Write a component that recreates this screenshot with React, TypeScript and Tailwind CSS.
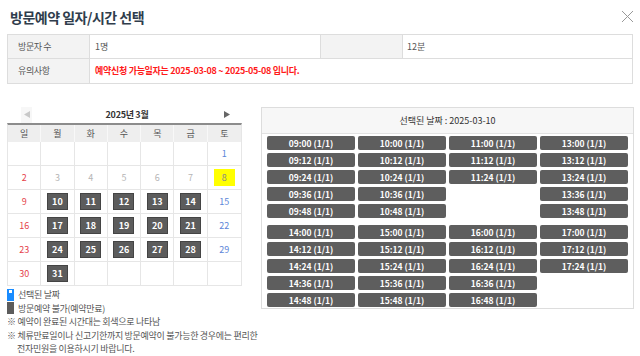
import React from "react";

const font = { fontFamily: '"Noto Sans CJK KR", "Noto Sans", sans-serif' };

type Cell = { d?: number; kind?: "sun" | "sat" | "past" | "off" | "today" | "empty" };

const weeks: Cell[][] = [
  [{}, {}, {}, {}, {}, {}, { d: 1, kind: "sat" }],
  [
    { d: 2, kind: "sun" },
    { d: 3, kind: "past" },
    { d: 4, kind: "past" },
    { d: 5, kind: "past" },
    { d: 6, kind: "past" },
    { d: 7, kind: "past" },
    { d: 8, kind: "today" },
  ],
  [
    { d: 9, kind: "sun" },
    { d: 10, kind: "off" },
    { d: 11, kind: "off" },
    { d: 12, kind: "off" },
    { d: 13, kind: "off" },
    { d: 14, kind: "off" },
    { d: 15, kind: "sat" },
  ],
  [
    { d: 16, kind: "sun" },
    { d: 17, kind: "off" },
    { d: 18, kind: "off" },
    { d: 19, kind: "off" },
    { d: 20, kind: "off" },
    { d: 21, kind: "off" },
    { d: 22, kind: "sat" },
  ],
  [
    { d: 23, kind: "sun" },
    { d: 24, kind: "off" },
    { d: 25, kind: "off" },
    { d: 26, kind: "off" },
    { d: 27, kind: "off" },
    { d: 28, kind: "off" },
    { d: 29, kind: "sat" },
  ],
  [{ d: 30, kind: "sun" }, { d: 31, kind: "off" }, {}, {}, {}, {}, {}],
];

const days = ["일", "월", "화", "수", "목", "금", "토"];

function DayCell({ c }: { c: Cell }) {
  let inner: React.ReactNode = null;
  if (c.d !== undefined) {
    if (c.kind === "off") {
      inner = (
        <div className="w-[21px] h-[17px] bg-[#5c5c5c] border border-[#444] text-white font-bold flex items-center justify-center text-[9px]">
          {c.d}
        </div>
      );
    } else if (c.kind === "today") {
      inner = (
        <div className="w-[21px] h-[17px] bg-[#ffff00] text-[#888] flex items-center justify-center text-[9px]">
          {c.d}
        </div>
      );
    } else {
      const color =
        c.kind === "sun" ? "text-[#e5414a]" : c.kind === "sat" ? "text-[#5b86d8]" : "text-[#b5b5b5]";
      inner = <span className={`text-[9px] ${color}`}>{c.d}</span>;
    }
  }
  return (
    <div className="h-[24px] border-r border-b border-[#e6e6e6] flex items-center justify-center last:border-r-0">
      {inner}
    </div>
  );
}

const group1: string[][] = [
  ["09:00", "09:12", "09:24", "09:36", "09:48"],
  ["10:00", "10:12", "10:24", "10:36", "10:48"],
  ["11:00", "11:12", "11:24"],
  ["13:00", "13:12", "13:24", "13:36", "13:48"],
];
const group2: string[][] = [
  ["14:00", "14:12", "14:24", "14:36", "14:48"],
  ["15:00", "15:12", "15:24", "15:36", "15:48"],
  ["16:00", "16:12", "16:24", "16:36", "16:48"],
  ["17:00", "17:12", "17:24"],
];

function Group({ cols }: { cols: string[][] }) {
  return (
    <div className="grid grid-cols-4 gap-x-[3px]">
      {cols.map((col, i) => (
        <div key={i} className="flex flex-col gap-[3px]">
          {col.map((t) => (
            <div
              key={t}
              className="h-[14px] rounded-[2px] bg-[#5e5e5e] text-white font-bold text-[8.5px] flex items-center justify-center leading-none"
            >
              {t} (1/1)
            </div>
          ))}
        </div>
      ))}
    </div>
  );
}

export default function App() {
  return (
    <div className="w-[640px] h-[356px] bg-white relative overflow-hidden text-[#555]" style={font}>
      <div className="flex items-center justify-between pl-[10px] pr-[6px] pt-[3px] h-[31px]">
        <h1 className="text-[14px] font-bold text-[#2f3d4c] tracking-[-0.5px] leading-none">
          방문예약 일자/시간 선택
        </h1>
        <svg width="13" height="13" viewBox="0 0 13 13" className="mt-[-2px]">
          <path d="M1 1 L12 12 M12 1 L1 12" stroke="#999" strokeWidth="1" />
        </svg>
      </div>

      <div className="mx-[7px] mt-[3px] border border-[#ddd] text-[9px]">
        <div className="flex h-[24px] border-b border-[#ddd]">
          <div className="w-[82px] bg-[#f3f3f3] border-r border-[#ddd] flex items-center pl-[10px] tracking-[-0.4px]">
            방문자 수
          </div>
          <div className="w-[231px] border-r border-[#ddd] flex items-center pl-[5px]">1명</div>
          <div className="w-[82px] bg-[#f3f3f3] border-r border-[#ddd]"></div>
          <div className="flex-1 flex items-center pl-[4px]">12분</div>
        </div>
        <div className="flex h-[24px]">
          <div className="w-[82px] bg-[#f3f3f3] border-r border-[#ddd] flex items-center pl-[10px] tracking-[-0.4px]">
            유의사항
          </div>
          <div className="flex-1 flex items-center pl-[5px] text-[#ff1a1a] font-bold tracking-[-0.3px]">
            예약신청 가능일자는 2025-03-08 ~ 2025-05-08 입니다.
          </div>
        </div>
      </div>

      <div className="flex mt-[22px] ml-[7px]">
        <div className="w-[235px]">
          <div className="h-[17px] flex items-center justify-between relative">
            <div className="w-[11px] h-[16px] ml-[14px] bg-[#f7f7f7] flex items-center justify-center">
              <svg width="6" height="7" viewBox="0 0 6 7">
                <path d="M6 0 L0 3.5 L6 7 Z" fill="#c8c8c8" />
              </svg>
            </div>
            <span className="text-[9px] text-[#333] font-bold tracking-[-0.3px]">2025년 3월</span>
            <div className="w-[11px] mr-[9px] flex items-center justify-center">
              <svg width="6" height="7" viewBox="0 0 6 7">
                <path d="M0 0 L6 3.5 L0 7 Z" fill="#666" />
              </svg>
            </div>
          </div>
          <div className="border-t-2 border-[#8c8c8c] border-l border-r border-[#e6e6e6]" style={{ borderTopColor: "#8c8c8c" }}>
            <div className="grid grid-cols-7 bg-[#eeeeee] h-[17px]">
              {days.map((d) => (
                <div key={d} className="flex items-center justify-center text-[9px] text-[#555] border-r border-[#f8f8f8] last:border-r-0">
                  {d}
                </div>
              ))}
            </div>
            {weeks.map((w, i) => (
              <div key={i} className="grid grid-cols-7">
                {w.map((c, j) => (
                  <DayCell key={j} c={c} />
                ))}
              </div>
            ))}
          </div>
          <div className="mt-[2px] text-[9px] leading-[13.6px] text-[#555] tracking-[-0.3px]">
            <div className="flex items-center gap-[4px]">
              <div className="w-[7px] h-[12px] bg-[#1a8cff] flex justify-center pt-[1px]">
                <div className="w-[3px] h-[3px] bg-white"></div>
              </div>
              <span>선택된 날짜</span>
            </div>
            <div className="flex items-center gap-[4px]">
              <div className="w-[7px] h-[12px] bg-[#5c5c5c]"></div>
              <span>방문예약 불가(예약만료)</span>
            </div>
            <div>※ 예약이 완료된 시간대는 회색으로 나타남</div>
            <div className="whitespace-nowrap">※ 체류만료일이나 신고기한까지 방문예약이 불가능한 경우에는 편리한</div>
            <div className="pl-[10px]">전자민원을 이용하시기 바랍니다.</div>
          </div>
        </div>

        <div className="ml-[19px] w-[373px] h-[202px] mt-[1px] border border-[#ddd] self-start">
          <div className="h-[26px] bg-[#f7f7f7] border-b border-[#e2e2e2] flex items-center justify-center text-[9px] text-[#333]">
            선택된 날짜 : 2025-03-10
          </div>
          <div className="px-[5px] pt-[2px]">
            <Group cols={group1} />
            <div className="h-[7px]"></div>
            <Group cols={group2} />
          </div>
        </div>
      </div>
    </div>
  );
}
